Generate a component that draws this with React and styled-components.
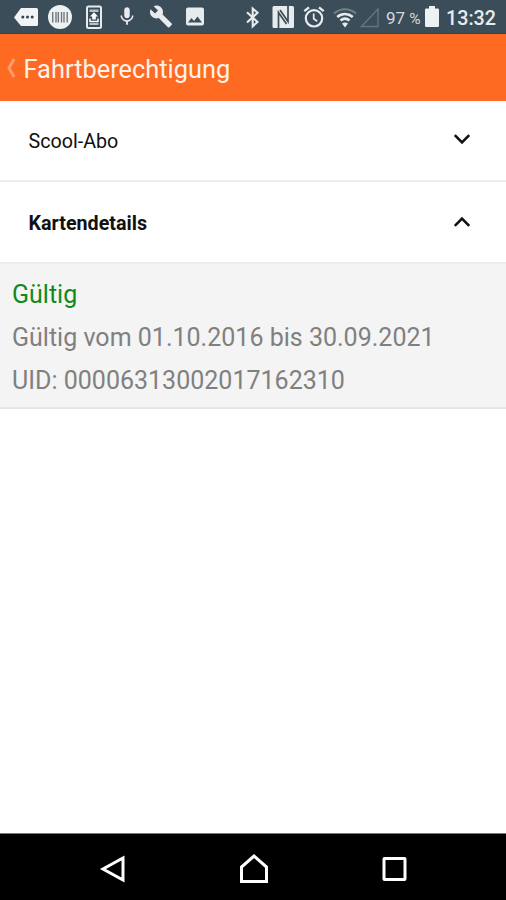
import React from "react";
import styled, { createGlobalStyle } from "styled-components";
import { MdBuild, MdImage, MdMic } from "react-icons/md";

const GlobalStyle = createGlobalStyle`
  body {
    margin: 0;
    background: #fff;
    font-family: Roboto, "Liberation Sans", sans-serif;
  }
`;

const StatusBar = () => (
  <Status>
    <Notifications>
      <Slot $width={24}>
        <svg width="24" height="24" viewBox="0 0 24 24">
          <path d="M7 3h15.500q1.500 0 1.500 1.500v15q0 1.500-1.500 1.500H7L0 12.500z" fill="#f1f3f4" />
          <circle cx="8.800" cy="12" r="1.500" fill="#33444f" />
          <circle cx="13.500" cy="12" r="1.500" fill="#33444f" />
          <circle cx="18.200" cy="12" r="1.500" fill="#33444f" />
        </svg>
      </Slot>
      <Slot $width={24} $gap={10}>
        <svg width="24" height="24" viewBox="0 0 24 24">
          <circle cx="12" cy="12" r="12" fill="#eef1f2" />
          <path
            d="M4.700 7v10.500M8 7v10.500M10.300 7v10.500M13.500 7v10.500M16 7v10.500M19.200 7v10.500"
            stroke="#70777c"
            strokeWidth="1.400"
          />
        </svg>
      </Slot>
      <Slot $width={16} $gap={14}>
        <svg width="16" height="24" viewBox="0 0 16 24">
          <rect x="1" y="1.500" width="14" height="21.500" rx="1.500" fill="#3b4d59" stroke="#e8ebed" strokeWidth="2" />
          <path d="M3.500 4.500h9v2.500h-9zM3.500 18h9v2h-9z" fill="#b9c1c6" />
          <path d="M8 7.200l4 4.300H9.800v3H6.200v-3H4z" fill="#fff" />
          <path d="M4 13.500v3h8v-3" fill="none" stroke="#fff" strokeWidth="1.500" />
        </svg>
      </Slot>
      <Slot $width={22} $gap={14}>
        <MdMic size={23} />
      </Slot>
      <Slot $width={24} $gap={11}>
        <MdBuild size={25} />
      </Slot>
      <Slot $width={24} $gap={10}>
        <MdImage size={25} />
      </Slot>
    </Notifications>
    <Slot $width={24} $gap={1}>
      <svg width="24" height="24" viewBox="0 0 24 24">
        <path d="M6 7.200L16.500 17l-4.800 4.300V3.500L16.500 7.800 6 17.600" fill="none" stroke="#e8ebed" strokeWidth="2.100" />
      </svg>
    </Slot>
    <Slot $width={22} $gap={7}>
      <svg width="22" height="24" viewBox="0 0 22 24">
        <rect x="0.500" y="1" width="21.500" height="22" rx="1.500" fill="#e8ebed" />
        <path
          d="M6.500 23V7.500L14.500 19M16 1v15.500L8 5"
          fill="none"
          stroke="#3b4d59"
          strokeWidth="1.700"
        />
      </svg>
    </Slot>
    <Slot $width={22} $gap={9}>
      <svg width="22" height="24" viewBox="0 0 22 24" fill="none" stroke="#e8ebed" strokeWidth="2.200">
        <circle cx="11" cy="13.300" r="8.200" />
        <path d="M1.300 6.200L6 2.300M20.700 6.200L16 2.300" strokeWidth="2.300" />
        <path d="M10.700 8.500v5.200l3.500 2.600" strokeWidth="1.700" />
      </svg>
    </Slot>
    <Slot $width={24} $gap={8}>
      <svg width="24" height="24" viewBox="0 0 24 24" fill="none">
        <path d="M1 8.500C7.500 2.700 16.500 2.700 23 8.500" stroke="#71808a" strokeWidth="2" />
        <path d="M4.200 12c4.700-4 10.900-4 15.600 0" stroke="#e8ebed" strokeWidth="2.600" />
        <path d="M7.500 15.500c2.800-2.300 6.200-2.300 9 0" stroke="#e8ebed" strokeWidth="2.600" />
        <path d="M9 18.500q3-2.200 6 0l-3 4z" fill="#e8ebed" />
      </svg>
    </Slot>
    <Slot $width={20} $gap={3}>
      <svg width="20" height="24" viewBox="0 0 20 24">
        <path d="M1.500 21.500L18 4v17.500z" fill="none" stroke="#66747e" strokeWidth="1.400" />
      </svg>
    </Slot>
    <Charge>
      97 <small>%</small>
    </Charge>
    <Slot $width={14} $gap={3}>
      <svg width="14" height="24" viewBox="0 0 14 24">
        <path d="M4 1h6v2.500h2.800q1.200 0 1.200 1.200v16q0 1.300-1.300 1.300H1.300Q0 22 0 20.700v-16q0-1.200 1.200-1.200H4z" fill="#eef1f2" />
      </svg>
    </Slot>
    <Clock>13:32</Clock>
  </Status>
);

const Chevron = ({ up }) => (
  <ChevronIcon $lift={up ? 0 : 3} width="18" height="12" viewBox="0 0 18 12">
    <path d={up ? "M1.800 9.800L9 2.600l7.200 7.200" : "M1.800 2.200L9 9.400l7.200-7.200"} />
  </ChevronIcon>
);

const App = () => {
  return (
    <Screen>
      <GlobalStyle />
      <StatusBar />
      <Header>
        <svg width="11" height="22" viewBox="0 0 11 22">
          <path d="M9 2L4 11l5 9" fill="none" stroke="#ff9c6c" strokeWidth="3" />
        </svg>
        <Title>Fahrtberechtigung</Title>
      </Header>
      <Row $height={79}>
        <Label>Scool-Abo</Label>
        <Chevron />
      </Row>
      <Row $height={80}>
        <Label $bold>Kartendetails</Label>
        <Chevron up />
      </Row>
      <Details>
        <Line $color="#118a1b">Gültig</Line>
        <Line>Gültig vom 01.10.2016 bis 30.09.2021</Line>
        <Line>UID: 00006313002017162310</Line>
      </Details>
      <NavBar>
        <svg width="27" height="30" viewBox="0 0 27 30">
          <path d="M24 4v22L4 15z" />
        </svg>
        <svg width="30" height="30" viewBox="0 0 30 30">
          <path d="M2.500 27.500V13L15 2l12.500 11v14.500z" />
        </svg>
        <svg width="26" height="30" viewBox="0 0 26 30">
          <rect x="3" y="4.500" width="21" height="21" rx="0.500" />
        </svg>
      </NavBar>
    </Screen>
  );
};

const Screen = styled.div`
  display: flex;
  flex-direction: column;
  width: 506px;
  height: 900px;
  overflow: hidden;
  background: #fff;
`;

const Status = styled.div`
  display: flex;
  align-items: center;
  box-sizing: border-box;
  height: 34px;
  padding-left: 14px;
  background: #3b4d59;
  border-bottom: 1px solid #294453;
  color: #e8ebed;
`;

const Notifications = styled.div`
  display: flex;
  align-items: center;
  width: 226px;
`;

const Slot = styled.span`
  display: flex;
  flex: none;
  justify-content: center;
  width: ${props => props.$width}px;
  margin-left: ${props => props.$gap || 0}px;
`;

const Charge = styled.span`
  width: 36px;
  margin: 2px 0 0 6px;
  font-size: 17px;
  white-space: nowrap;
  color: #d5dadd;

  small {
    font-size: 15.5px;
  }
`;

const Clock = styled.span`
  margin: 3px 0 0 7px;
  font-size: 19.7px;
  font-weight: 500;
`;

const Header = styled.header`
  display: flex;
  align-items: center;
  box-sizing: border-box;
  height: 67px;
  padding-left: 5px;
  background: #ff6a22;
`;

const Title = styled.h1`
  margin: 3px 0 0 7.5px;
  font-size: 25.4px;
  font-weight: 400;
  color: #fff3ec;
`;

const Row = styled.div`
  display: flex;
  align-items: center;
  justify-content: space-between;
  height: ${props => props.$height}px;
  padding: 0 35px 0 28.5px;
  border-bottom: 2px solid #ececec;
`;

const Label = styled.span`
  margin-top: 2px;
  font-size: 19.7px;
  font-weight: ${props => (props.$bold ? 700 : 400)};
  color: #111;
`;

const ChevronIcon = styled.svg`
  margin-bottom: ${props => props.$lift}px;

  path {
    fill: none;
    stroke: #111;
    stroke-width: 2.6px;
  }
`;

const Details = styled.div`
  box-sizing: border-box;
  height: 145px;
  padding: 9px 12px 0;
  background: #f4f4f4;
  border-bottom: 2px solid #e6e6e6;
`;

const Line = styled.p`
  margin: 0;
  font-size: 25.03px;
  line-height: 43px;
  white-space: nowrap;
  color: ${props => props.$color || "#808080"};
`;

const NavBar = styled.nav`
  display: flex;
  align-items: center;
  justify-content: space-between;
  box-sizing: border-box;
  height: 67px;
  margin-top: auto;
  padding: 4px 99px 0;
  border-top: 1px solid #777;
  background: #000;

  svg {
    fill: none;
    stroke: #fff;
    stroke-width: 3px;
  }
`;

export default App;
